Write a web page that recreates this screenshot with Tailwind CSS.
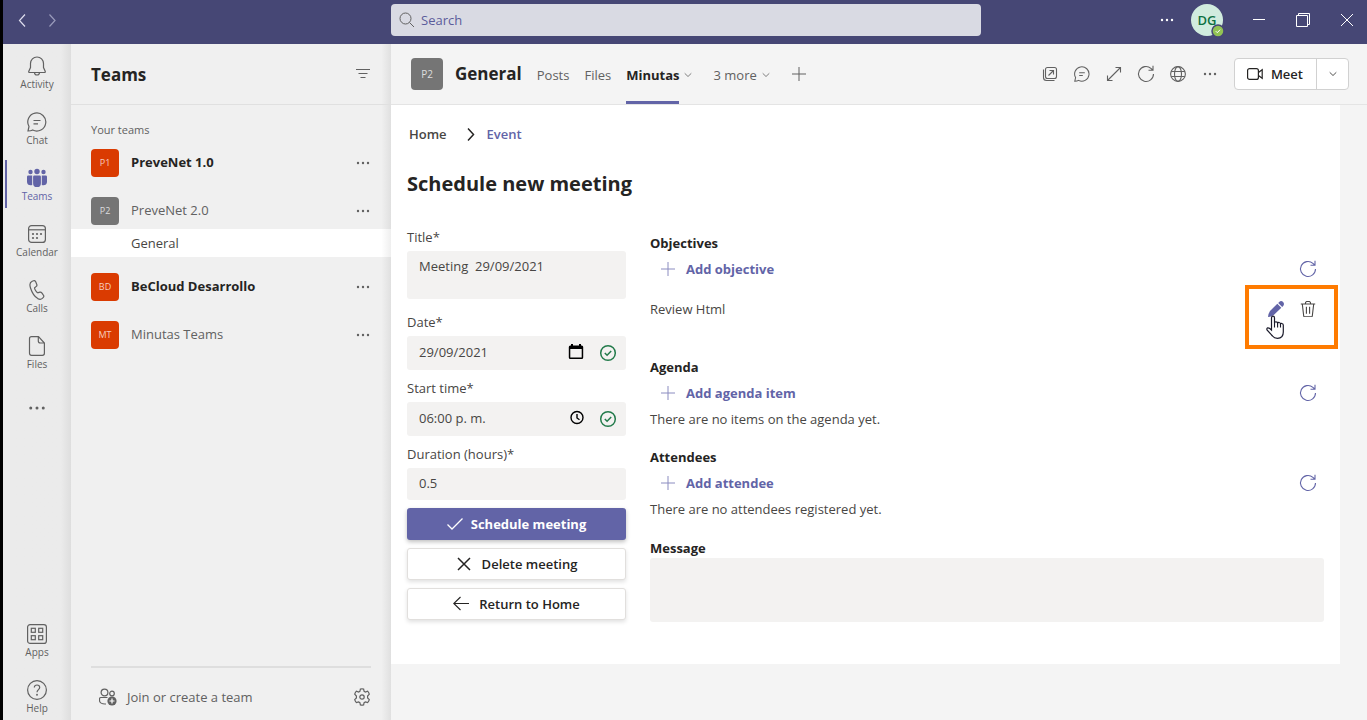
<!DOCTYPE html>
<html lang="en">
<head>
<meta charset="utf-8">
<meta name="viewport" content="width=device-width, initial-scale=1">
<title>Teams - Schedule new meeting</title>
<script src="https://cdn.jsdelivr.net/npm/@tailwindcss/browser@4"></script>
</head>
<body class="h-screen overflow-hidden border-l-3 border-black bg-[#f4f4f4] font-['Open_Sans','Noto_Sans',sans-serif] text-[13px] leading-5 text-[#252423]">
<svg class="hidden" aria-hidden="true">
  <symbol id="dots" viewBox="0 0 16 16"><g fill="currentColor" stroke="none"><circle cx="3" cy="8" r="1.2"/><circle cx="8" cy="8" r="1.2"/><circle cx="13" cy="8" r="1.2"/></g></symbol>
  <symbol id="down" viewBox="0 0 10 10"><path d="M1.700 3.300 5 6.500 8.300 3.300"/></symbol>
  <symbol id="refresh" viewBox="0 0 20 20"><path d="M17.500 10a7.500 7.500 0 1 1-2.600-5.700L16.700 6M17 1.800v4.500h-4.500"/></symbol>
  <symbol id="plus" viewBox="0 0 16 16"><path d="M8 1v14M1 8h14"/></symbol>
  <symbol id="chat" viewBox="0 0 20 20"><path d="M1 19l1-4.500A9 9 0 1 1 5.700 18C4.500 18.700 2.500 19 1 19ZM6.500 8.500h7M6.500 11.800h4.500"/></symbol>
  <symbol id="okay" viewBox="0 0 18 18"><circle cx="9" cy="9" r="7.300"/><path d="m5.800 9 2.300 2.300 4.100-4.300"/></symbol>
</svg>
<div class="flex h-full flex-col">
  <header class="grid h-11 shrink-0 grid-cols-[388px_minmax(0,590px)_1fr] bg-[#464775] text-white">
    <nav class="flex h-10 items-center gap-3 pl-2.5" aria-label="History">
      <button aria-label="Back" class="text-[#dddded]"><svg class="size-[18px] fill-none stroke-current stroke-[1.2]" viewBox="0 0 18 18"><path d="M12 3.500 6.500 9.500 12 15.500"/></svg></button>
      <button aria-label="Forward" class="text-[#9a9bbb]"><svg class="size-[18px] fill-none stroke-current stroke-[1.2]" viewBox="0 0 18 18"><path d="m6.500 3.500 5.500 6-5.500 6"/></svg></button>
    </nav>
    <label class="mt-1 flex h-8 items-center gap-1.5 rounded bg-[#d9dae3] px-2 text-[#464775]">
      <svg class="size-4 fill-none stroke-[#616161]" viewBox="0 0 16 16"><circle cx="6.500" cy="6.500" r="5.500"/><path d="m10.500 10.500 4.500 4.500"/></svg>
      <input type="search" aria-label="Search" placeholder="Search" class="min-w-0 flex-1 bg-transparent outline-none placeholder:text-[#5b5c9b]">
    </label>
    <div class="flex h-10 items-center justify-end pr-3">
      <button aria-label="More options" class="mr-4"><svg class="size-4"><use href="#dots"/></svg></button>
      <button aria-label="Account DG" class="relative mr-7 size-8 rounded-full bg-[#d1ecde] text-[13px] font-semibold text-[#0e7042]">DG
        <svg class="absolute -right-0.5 -bottom-0.5 size-3.5" viewBox="0 0 14 14"><circle cx="7" cy="7" r="6" fill="#92c353" stroke="#464775" stroke-width="1.500"/><path d="m4.800 7.200 1.500 1.500 2.800-3" fill="none" stroke="#fff"/></svg>
      </button>
      <button aria-label="Minimize" class="mr-7"><svg class="size-4 stroke-current" viewBox="0 0 16 16"><path d="M2 7.500h12"/></svg></button>
      <button aria-label="Restore" class="mr-7"><svg class="size-4 fill-none stroke-current" viewBox="0 0 16 16"><path d="M1.500 3.500h11v11h-11zM3.500 3.500v-2h11v11h-2"/></svg></button>
      <button aria-label="Close"><svg class="size-4 fill-none stroke-current" viewBox="0 0 16 16"><path d="m2 2 12 12M14 2 2 14"/></svg></button>
    </div>
  </header>

  <div class="flex min-h-0 flex-1">
    <nav aria-label="Apps" class="flex w-17 shrink-0 flex-col justify-between bg-linear-to-r from-[#ebebeb] from-85% to-[#dedede] pt-1 text-[10px] leading-4 text-[#616161]">
      <div class="flex flex-col gap-2">
        <a href="#" class="flex h-12 flex-col items-center pt-2">
          <svg class="size-5 shrink-0 fill-none stroke-current stroke-[1.2]" viewBox="0 0 20 20"><path d="M10 1a6.500 6.500 0 0 0-6.500 6.500v4L1.800 15.200c-.3.700 0 1.300.8 1.300h14.800c.8 0 1.100-.6.800-1.300l-1.700-3.700v-4A6.500 6.500 0 0 0 10 1ZM7.500 16.500a2.500 2.500 0 0 0 5 0"/></svg>Activity</a>
        <a href="#" class="flex h-12 flex-col items-center pt-2">
          <svg class="size-5 shrink-0 fill-none stroke-current stroke-[1.2]"><use href="#chat"/></svg>Chat</a>
        <a href="#" aria-current="page" class="flex h-12 flex-col items-center bg-[linear-gradient(#6264a7,#6264a7)] bg-[length:2px_100%] bg-[position:2px_0] bg-no-repeat pt-2 text-[#6264a7]">
          <svg class="size-5 shrink-0 fill-current" viewBox="0 0 20 20"><circle cx="3.500" cy="4" r="2.200"/><circle cx="10" cy="3.500" r="2.700"/><circle cx="16.500" cy="4" r="2.200"/><path d="M1.300 7.500h3.900V17C2.500 18 0 16.500 0 14V8.800q0-1.300 1.300-1.300ZM14.800 7.500h3.900Q20 7.500 20 8.800V14c0 2.500-2.500 4-5.200 3ZM7.300 7.500h5.400q1.200 0 1.200 1.200v6.500a3.900 3.900 0 0 1-7.800 0V8.700q0-1.200 1.200-1.200Z"/></svg>Teams</a>
        <a href="#" class="flex h-12 flex-col items-center pt-2">
          <svg class="size-5 shrink-0 fill-none stroke-current stroke-[1.2]" viewBox="0 0 20 20"><rect x="1.600" y="1.600" width="16.800" height="16.800" rx="3"/><path d="M1.600 5.800h16.800"/><g class="fill-current stroke-none"><circle cx="6" cy="10" r="1.100"/><circle cx="10" cy="10" r="1.100"/><circle cx="14" cy="10" r="1.100"/><circle cx="6" cy="14" r="1.100"/><circle cx="10" cy="14" r="1.100"/></g></svg>Calendar</a>
        <a href="#" class="flex h-12 flex-col items-center pt-2">
          <svg class="size-5 shrink-0 fill-none stroke-current stroke-[1.2]" viewBox="0 0 20 20"><path d="M5.200 1.200 6.600.7c1-.3 1.700.1 2.100 1l1.100 2.700c.3.800.1 1.500-.5 2L7.600 7.800c-.2 1.200 1.700 4.500 3.100 5l2.100-.7c.8-.2 1.500 0 2 .7l1.600 2.300c.6.800.5 1.600-.1 2.300l-1 1c-1.200 1.100-2.800 1.100-4.500.2-3-1.700-5.700-5.700-7.300-10.600-1.200-3.700-.5-5.900 1.700-6.800Z"/></svg>Calls</a>
        <a href="#" class="flex h-12 flex-col items-center pt-2">
          <svg class="size-5 shrink-0 fill-none stroke-current stroke-[1.2]" viewBox="0 0 20 20"><path d="M4.500.7h7L17.400 7v10.300q0 2-2 2H4.500q-2 0-2-2V2.700q0-2 2-2ZM11.300.7V5q0 2 2 2h4.100"/></svg>Files</a>
        <button aria-label="More apps" class="flex h-12 items-center justify-center"><svg class="size-5"><use href="#dots"/></svg></button>
      </div>
      <div class="flex flex-col gap-2">
        <a href="#" class="flex h-12 flex-col items-center pt-2">
          <svg class="size-5 shrink-0 fill-none stroke-current stroke-[1.2]" viewBox="0 0 20 20"><rect x=".6" y=".6" width="18.800" height="18.800" rx="2.500"/><rect x="4.300" y="4.300" width="4" height="4"/><rect x="11.700" y="4.300" width="4" height="4"/><rect x="4.300" y="11.700" width="4" height="4"/><rect x="11.700" y="11.700" width="4" height="4"/></svg>Apps</a>
        <a href="#" class="flex h-12 flex-col items-center pt-2">
          <svg class="size-5 shrink-0 fill-none stroke-current stroke-[1.2]" viewBox="0 0 20 20"><circle cx="10" cy="10" r="9.400"/><path d="M7.300 7.600c0-1.600 1.100-2.600 2.700-2.600s2.700 1 2.700 2.500c0 2-2.700 2.400-2.700 4.800"/><circle cx="10" cy="14.800" r=".4"/></svg>Help</a>
      </div>
    </nav>

    <aside class="flex w-80 shrink-0 flex-col bg-linear-to-r from-[#f0f0f0] from-97% to-[#e0e0e0]">
      <div class="flex h-[61px] shrink-0 items-center justify-between border-b border-[#e0e0e0] px-5">
        <h2 class="pt-0.5 text-[17px] leading-6 font-bold">Teams</h2>
        <button aria-label="Filter" class="text-[#616161]"><svg class="size-4 stroke-current" viewBox="0 0 16 16"><path d="M1 3.500h14M3.500 7.500h9M5.500 11.500h5"/></svg></button>
      </div>
      <p class="mt-[15px] px-5 text-[11px] leading-5 text-[#616161]">Your teams</p>
      <ul class="mt-[9px] flex flex-1 flex-col text-[#616161]">
        <li class="mb-5 flex h-7 items-center gap-3 px-5"><span class="flex size-7 items-center justify-center rounded bg-[#da3b01] text-[9px] text-[#f6cdbf]">P1</span><a href="#" class="flex-1 pb-0.5 font-bold text-[#252423]">PreveNet 1.0</a><button aria-label="PreveNet 1.0 options"><svg class="size-4"><use href="#dots"/></svg></button></li>
        <li class="mb-4">
          <div class="flex h-7 items-center gap-3 px-5"><span class="flex size-7 items-center justify-center rounded bg-[#757575] text-[9px] text-[#dddddd]">P2</span><a href="#" class="flex-1 pb-0.5">PreveNet 2.0</a><button aria-label="PreveNet 2.0 options"><svg class="size-4"><use href="#dots"/></svg></button></div>
          <a href="#" class="mt-1 flex h-7 items-center bg-linear-to-r from-white from-97% to-[#efefef] pl-15 text-[#484644]">General</a>
        </li>
        <li class="mb-5 flex h-7 items-center gap-3 px-5"><span class="flex size-7 items-center justify-center rounded bg-[#da3b01] text-[9px] text-[#f6cdbf]">BD</span><a href="#" class="flex-1 pb-0.5 font-bold text-[#252423]">BeCloud Desarrollo</a><button aria-label="BeCloud Desarrollo options"><svg class="size-4"><use href="#dots"/></svg></button></li>
        <li class="flex h-7 items-center gap-3 px-5"><span class="flex size-7 items-center justify-center rounded bg-[#da3b01] text-[9px] text-[#f6cdbf]">MT</span><a href="#" class="flex-1 pb-0.5">Minutas Teams</a><button aria-label="Minutas Teams options"><svg class="size-4"><use href="#dots"/></svg></button></li>
      </ul>
      <div class="mx-5 flex h-[54px] items-center border-t-2 border-[#dedede] pt-1.5 text-[#616161]">
        <a href="#" class="flex flex-1 items-center gap-2.5 pl-2">
          <svg class="size-[18px] fill-none stroke-current stroke-[1.2]" viewBox="0 0 18 18"><circle cx="5.500" cy="4.500" r="3.400"/><circle cx="13" cy="5.500" r="2.300"/><path d="M8.500 9.500H2q-1.500 0-1.500 1.500v1.500c0 2 2.500 3.500 5.500 3.500h1"/><circle cx="13" cy="13" r="4.600" class="fill-current stroke-none"/><path d="M13 10.500v5M10.500 13h5" class="stroke-white"/></svg>
          Join or create a team</a>
        <button aria-label="Manage teams"><svg class="size-[18px] fill-none stroke-current stroke-[1.2]" viewBox="0 0 18 18"><path d="M7.400 1q1.600-.4 3.200 0l.5 2.300 1.300.7 2.200-.8q1.200 1.200 1.700 2.900L14.600 8v2l1.700 1.700q-.5 1.700-1.700 2.900l-2.200-.7-1.300.7-.5 2.300q-1.600.4-3.200 0l-.5-2.300-1.300-.7-2.200.7q-1.200-1.200-1.700-2.900L3.400 10V8L1.700 6.100q.5-1.700 1.700-2.900l2.200.8 1.300-.7Z"/><circle cx="9" cy="9" r="2.200"/></svg></button>
      </div>
    </aside>

    <main class="flex min-w-0 flex-1 flex-col">
      <div class="flex h-[61px] shrink-0 items-center border-b border-[#e4e4e4] pr-[18px] pl-5 text-[#616161]">
        <span class="mr-3 flex size-8 items-center justify-center rounded bg-[#757575] text-[10px] text-[#dddddd]">P2</span>
        <h1 class="mr-[15px] text-[17px] leading-6 font-bold text-[#252423]">General</h1>
        <nav class="flex h-full items-center" aria-label="Channel tabs">
          <a href="#" class="mr-[15px] pt-0.5">Posts</a>
          <a href="#" class="mr-[15px] pt-0.5">Files</a>
          <a href="#" class="flex h-full items-center border-y-3 border-t-transparent border-b-[#6264a7] pt-0.5 font-bold text-[#252423]">Minutas</a>
          <button aria-label="Minutas options" class="mr-5 ml-1 pt-0.5"><svg class="size-2.5 fill-none stroke-current stroke-[0.8]"><use href="#down"/></svg></button>
          <button class="mr-5 flex items-center gap-1 pt-0.5">3 more<svg class="size-2.5 fill-none stroke-current stroke-[0.8]"><use href="#down"/></svg></button>
          <button aria-label="Add a tab"><svg class="size-4 fill-none stroke-current"><use href="#plus"/></svg></button>
        </nav>
        <div class="ml-auto flex items-center gap-4">
          <button aria-label="Pop out"><svg class="size-4 fill-none stroke-current stroke-[1.1]" viewBox="0 0 16 16"><rect x="3.500" y="1.500" width="11" height="11" rx="2"/><path d="M1.500 3.500v8q0 3 3 3h8M6.500 9.500l5-5M7.500 4.500h4v4"/></svg></button>
          <button aria-label="Conversation"><svg class="size-4 fill-none stroke-current stroke-[1.3]"><use href="#chat"/></svg></button>
          <button aria-label="Expand"><svg class="size-4 fill-none stroke-current stroke-[1.1]" viewBox="0 0 16 16"><path d="M1.500 14.500l13-13M9.500 1.500h5v5M1.500 9.500v5h5"/></svg></button>
          <button aria-label="Reload"><svg class="size-4 overflow-visible fill-none stroke-current stroke-[1.1]" viewBox="2 2 16 16"><use href="#refresh" width="20" height="20"/></svg></button>
          <button aria-label="Open website"><svg class="size-4 fill-none stroke-current stroke-[1.1]" viewBox="0 0 16 16"><circle cx="8" cy="8" r="7.400"/><ellipse cx="8" cy="8" rx="3.500" ry="7.400"/><path d="M1.200 5.500h13.600M1.200 10.500h13.600"/></svg></button>
          <button aria-label="More options"><svg class="size-4"><use href="#dots"/></svg></button>
          <div class="flex h-8 overflow-hidden rounded border border-[#d1d1d1] bg-white text-[#252423]">
            <button class="flex items-center gap-2 pr-[13px] pl-3 font-semibold"><svg class="size-4 fill-none stroke-current stroke-[1.2]" viewBox="0 0 16 16"><rect x=".6" y="2.600" width="10.800" height="10.800" rx="2"/><path d="m11.400 6.500 3.800-2.800v8.600l-3.800-2.800"/></svg>Meet</button>
            <button aria-label="Meet options" class="flex w-8 items-center justify-center border-l border-[#d1d1d1]"><svg class="size-2.5 fill-none stroke-current stroke-[0.8]"><use href="#down"/></svg></button>
          </div>
        </div>
      </div>

      <div class="mr-[27px] bg-white px-4 pt-[19px] pb-[42px]">
        <nav class="flex items-center pl-0.5 font-semibold" aria-label="Breadcrumb">
          <a href="#" class="text-[#484644]">Home</a>
          <svg class="mr-2 ml-4 size-4 fill-none stroke-[#252423] stroke-[1.5]" viewBox="0 0 16 16"><path d="m5 2.500 5.500 6L5 14.500"/></svg>
          <a href="#" class="text-[#6264a7]">Event</a>
        </nav>
        <h2 class="mt-[26px] text-xl leading-7 font-bold">Schedule new meeting</h2>
        <form class="mt-[29px] grid grid-cols-[219px_1fr] gap-6">
          <div class="flex flex-col text-[#484644]">
            <label for="title" class="mb-1">Title*</label>
            <textarea id="title" class="mb-[13px] h-12 resize-none rounded-[3px] bg-[#f3f2f1] px-3 py-[5px] outline-none">Meeting  29/09/2021</textarea>
            <label for="date" class="mb-1">Date*</label>
            <div class="mb-2 flex h-[34px] items-center rounded-[3px] bg-[#f3f2f1] pr-[9px] pl-3">
              <input id="date" type="text" value="29/09/2021" class="min-w-0 flex-1 bg-transparent pb-0.5 outline-none">
              <button type="button" aria-label="Pick a date" class="mr-[15px] pb-0.5"><svg class="size-4 fill-black" viewBox="0 0 16 16"><path fill-rule="evenodd" d="M3 0h2v1.500h6V0h2v1.500h.700q1.500 0 1.500 1.500v10.500q0 1.500-1.500 1.500H2.300Q.8 15 .8 13.500V3q0-1.500 1.500-1.500H3ZM2.300 5v8.500h11.400V5Z"/></svg></button>
              <svg class="size-[18px] fill-none stroke-[#237b4b] stroke-[1.5]"><use href="#okay"/></svg>
            </div>
            <label for="start" class="mb-1">Start time*</label>
            <div class="mb-2 flex h-[34px] items-center rounded-[3px] bg-[#f3f2f1] pr-[9px] pl-3">
              <input id="start" type="text" value="06:00 p. m." class="min-w-0 flex-1 bg-transparent pb-0.5 outline-none">
              <button type="button" aria-label="Pick a time" class="mr-[15px] pb-0.5"><svg class="size-4 fill-none stroke-black stroke-[1.4]" viewBox="0 0 16 16"><circle cx="9" cy="7.500" r="6"/><path d="M9 4v4l2.500 1.800"/></svg></button>
              <svg class="size-[18px] fill-none stroke-[#237b4b] stroke-[1.5]"><use href="#okay"/></svg>
            </div>
            <label for="duration" class="mb-1">Duration (hours)*</label>
            <input id="duration" type="text" value="0.5" class="mb-2 h-8 rounded-[3px] bg-[#f3f2f1] px-3 pb-0.5 outline-none">
            <button type="submit" class="mb-2 flex h-8 items-center justify-center gap-2 rounded-[3px] bg-[#6264a7] font-bold text-white shadow-[0_2px_4px_rgba(0,0,0,0.25)]"><svg class="size-4 fill-none stroke-current stroke-[1.3]" viewBox="0 0 16 16"><path d="m.5 8.500 4.500 4.500L15.500 2.500"/></svg>Schedule meeting</button>
            <button type="button" class="mb-2 flex h-8 items-center justify-center gap-2.5 rounded-[3px] border border-[#e1dfdd] bg-white font-semibold text-[#252423] shadow-[0_2px_4px_rgba(0,0,0,0.12)]"><svg class="size-4 fill-none stroke-current stroke-[1.5]" viewBox="0 0 16 16"><path d="m2 2 12 12M14 2 2 14"/></svg>Delete meeting</button>
            <button type="button" class="flex h-8 items-center justify-center gap-2.5 rounded-[3px] border border-[#e1dfdd] bg-white font-semibold text-[#252423] shadow-[0_2px_4px_rgba(0,0,0,0.12)]"><svg class="size-4 fill-none stroke-current stroke-[1.1]" viewBox="0 0 16 16"><path d="M16 7.500H.8M7.500 1 .8 7.500 7.500 14"/></svg>Return to Home</button>
          </div>

          <div class="flex flex-col pt-1.5 text-[#484644]">
            <h3 class="font-bold text-[#252423]">Objectives</h3>
            <div class="flex h-8 items-center justify-between px-2 text-[#6264a7]">
              <button type="button" class="flex items-center gap-2.5 pl-0.5 font-bold"><svg class="size-4 fill-none stroke-[#8b8cc0]"><use href="#plus"/></svg>Add objective</button>
              <button type="button" aria-label="Refresh objectives"><svg class="size-4 overflow-visible fill-none stroke-current stroke-[1.1]" viewBox="2 2 16 16"><use href="#refresh" width="20" height="20"/></svg></button>
            </div>
            <div class="mt-2 mb-8 flex h-8 items-center justify-between">
              <span>Review Html</span>
              <div class="relative flex items-center gap-4 pr-2">
                <button type="button" aria-label="Edit objective"><svg class="size-4 fill-[#6264a7]" viewBox="0 0 16 16"><path d="M9.300 2.700 13.300 6.700 5.800 14Q3.500 15.500 0 16 .300 12.500 2 10ZM10.200 1.900l1-1q2-1.600 3.900.1 1.700 2 .1 3.900l-1 1Z"/></svg></button>
                <button type="button" aria-label="Delete objective"><svg class="size-4 fill-none stroke-[#484644] stroke-[1.1]" viewBox="0 0 16 16"><path d="M.8 3h14.400M5.300 3q0-2.500 1.600-2.500h2.200q1.600 0 1.600 2.500M2.300 3l1.400 12q.1.700.8.700h7q.7 0 .8-.7L13.700 3M6.400 5.800v7M9.600 5.800v7"/></svg></button>
                <div class="pointer-events-none absolute -top-4 -right-3.5 h-16 w-[93px] border-4 border-[#ff7b00]"></div>
                <svg class="pointer-events-none absolute top-3.5 -left-0.5 h-6 w-[18px]" viewBox="0 0 18 24"><path d="M5.500 15V3Q5.500 1.200 7 1.200T8.500 3v5Q9 6.500 10.300 6.800 11.500 7 11.600 8.200q.5-1 1.700-.7 1.100.2 1.200 1.500.5-.8 1.500-.5 1.300.3 1.300 1.800V17q0 6.300-5.800 6.300-3.300 0-5-2.300L1 15Q.5 13.300 1.600 12.900q1.500-.4 3.900 2.100Z" fill="#fff" stroke="#1b1b2b" stroke-width="1.200"/><path d="M8.500 8v4.500M11.600 8.500v4M14.500 9v3.500" stroke="#1b1b2b" stroke-width="1.100"/></svg>
              </div>
            </div>
            <h3 class="font-bold text-[#252423]">Agenda</h3>
            <div class="flex h-8 items-center justify-between px-2 text-[#6264a7]">
              <button type="button" class="flex items-center gap-2.5 pl-0.5 font-bold"><svg class="size-4 fill-none stroke-[#8b8cc0]"><use href="#plus"/></svg>Add agenda item</button>
              <button type="button" aria-label="Refresh agenda"><svg class="size-4 overflow-visible fill-none stroke-current stroke-[1.1]" viewBox="2 2 16 16"><use href="#refresh" width="20" height="20"/></svg></button>
            </div>
            <p class="mb-[18px]">There are no items on the agenda yet.</p>
            <h3 class="font-bold text-[#252423]">Attendees</h3>
            <div class="flex h-8 items-center justify-between px-2 text-[#6264a7]">
              <button type="button" class="flex items-center gap-2.5 pl-0.5 font-bold"><svg class="size-4 fill-none stroke-[#8b8cc0]"><use href="#plus"/></svg>Add attendee</button>
              <button type="button" aria-label="Refresh attendees"><svg class="size-4 overflow-visible fill-none stroke-current stroke-[1.1]" viewBox="2 2 16 16"><use href="#refresh" width="20" height="20"/></svg></button>
            </div>
            <p class="mb-[19px]">There are no attendees registered yet.</p>
            <label for="message" class="font-bold text-[#252423]">Message</label>
            <textarea id="message" class="h-16 resize-none rounded-[3px] bg-[#f3f2f1] px-3 py-1.5 outline-none"></textarea>
          </div>
        </form>
      </div>
    </main>
  </div>
</div>
</body>
</html>
